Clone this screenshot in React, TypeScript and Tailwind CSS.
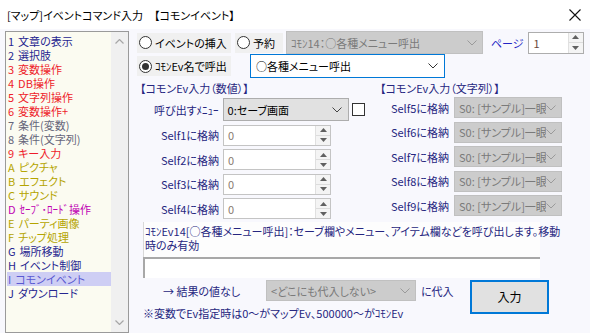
import React from "react";

const FONT = "font-['Noto_Sans_CJK_JP','Noto_Sans',sans-serif] [font-feature-settings:'palt']";

type Item = { key: string; text: string; color: string };

const ITEMS: Item[] = [
  { key: "1", text: "文章の表示", color: "text-[#262690]" },
  { key: "2", text: "選択肢", color: "text-[#262690]" },
  { key: "3", text: "変数操作", color: "text-[#ee1c2a]" },
  { key: "4", text: "DB操作", color: "text-[#ee1c2a]" },
  { key: "5", text: "文字列操作", color: "text-[#ee1c2a]" },
  { key: "6", text: "変数操作+", color: "text-[#ee1c2a]" },
  { key: "7", text: "条件(変数)", color: "text-[#66667a]" },
  { key: "8", text: "条件(文字列)", color: "text-[#66667a]" },
  { key: "9", text: "キー入力", color: "text-[#ee1c2a]" },
  { key: "A", text: "ピクチャ", color: "text-[#b4a400]" },
  { key: "B", text: "エフェクト", color: "text-[#b4a400]" },
  { key: "C", text: "サウンド", color: "text-[#b4a400]" },
  { key: "D", text: "ｾｰﾌﾞ･ﾛｰﾄﾞ操作", color: "text-[#c000b4]" },
  { key: "E", text: "パーティ画像", color: "text-[#b4a400]" },
  { key: "F", text: "チップ処理", color: "text-[#b4a400]" },
  { key: "G", text: "場所移動", color: "text-[#262690]" },
  { key: "H", text: "イベント制御", color: "text-[#262690]" },
  { key: "I", text: "コモンイベント", color: "text-[#5a5ad2]" },
  { key: "J", text: "ダウンロード", color: "text-[#262690]" },
];

function Chevron({ color = "#555" }: { color?: string }) {
  return (
    <svg width="10" height="6" viewBox="0 0 10 6" className="shrink-0">
      <path d="M0.5 0.5 L5 5 L9.5 0.5" fill="none" stroke={color} strokeWidth="1" />
    </svg>
  );
}

function Tri({ up }: { up?: boolean }) {
  return (
    <svg width="7" height="4" viewBox="0 0 7 4">
      <path d={up ? "M0 4 L3.5 0 L7 4 Z" : "M0 0 L3.5 4 L7 0 Z"} fill="#606060" />
    </svg>
  );
}

function Radio({ label, checked, w }: { label: string; checked?: boolean; w: string }) {
  return (
    <div className={`flex h-[20px] shrink-0 items-center gap-[3px] bg-[#f0f0f0] pl-[2px] ${w}`}>
      <span className="flex h-[13px] w-[13px] shrink-0 items-center justify-center rounded-full border border-[#333] bg-white">
        {checked && <span className="h-[7px] w-[7px] rounded-full bg-[#333]" />}
      </span>
      <span className="whitespace-nowrap text-[11px] leading-[14px] text-black">{label}</span>
    </div>
  );
}

function SpinButtons() {
  return (
    <div className="flex w-[15px] flex-col border-l border-[#e0e0e0] bg-[#f4f4f4]">
      <div className="flex flex-1 items-center justify-center border-b border-[#dcdcdc]">
        <Tri up />
      </div>
      <div className="flex flex-1 items-center justify-center">
        <Tri />
      </div>
    </div>
  );
}

function Spin({ value, w }: { value: string; w: string }) {
  return (
    <div className={`flex h-[21px] items-stretch border border-[#c4c4c4] bg-white ${w}`}>
      <span className="flex flex-1 items-center pl-[4px] text-[11px] leading-[14px] text-[#8a7a70]">{value}</span>
      <SpinButtons />
    </div>
  );
}

function DisabledSelect({ text, w, h = "h-[21px]" }: { text: string; w: string; h?: string }) {
  return (
    <div className={`flex items-center justify-between overflow-hidden border border-[#c0c0c0] bg-[#cccccc] pl-[4px] pr-[5px] ${w} ${h}`}>
      <span className="overflow-hidden whitespace-nowrap text-[11px] leading-[14px] text-[#7a7a7a]">{text}</span>
      <Chevron color="#9a9a9a" />
    </div>
  );
}

const LABEL = "whitespace-nowrap text-[11px] leading-[14px] text-[#262680]";

export default function App() {
  return (
    <div className={`flex h-[333px] w-[590px] flex-col overflow-hidden bg-[#f8f8fd] ${FONT}`}>
      {/* title bar */}
      <div className="flex h-[29px] shrink-0 items-center justify-between bg-white pl-[7px] pr-[9px]">
        <span className="whitespace-nowrap text-[11px] leading-[14px] text-black">[マップ]イベントコマンド入力　【コモンイベント】</span>
        <svg width="12" height="12" viewBox="0 0 12 12">
          <path d="M0.5 0.5 L11.5 11.5 M11.5 0.5 L0.5 11.5" stroke="#111" strokeWidth="1.1" />
        </svg>
      </div>

      <div className="flex flex-1 pt-[2px]">
        {/* command list */}
        <div className="ml-[5px] flex h-[302px] w-[124px] border border-[#9a9a9a] bg-[#fbfbf1]">
          <div className="flex flex-1 flex-col pl-[1px] pt-[2px]">
            {ITEMS.map((it) => (
              <div
                key={it.key}
                className={`flex h-[14px] items-center overflow-hidden whitespace-nowrap pl-[1px] text-[11px] leading-[14px] ${it.color} ${
                  it.key === "I" ? "bg-[#cecef4]" : ""
                }`}
              >
                <span className="mr-[4px]">{it.key}</span>
                <span>{it.text}</span>
              </div>
            ))}
          </div>
          <div className="flex w-[17px] flex-col items-center justify-between bg-[#f0f0f0] py-[7px]">
            <svg width="9" height="5" viewBox="0 0 9 5">
              <path d="M0.5 4.5 L4.5 0.5 L8.5 4.5" fill="none" stroke="#a6a6a6" strokeWidth="1.2" />
            </svg>
            <svg width="9" height="5" viewBox="0 0 9 5">
              <path d="M0.5 0.5 L4.5 4.5 L8.5 0.5" fill="none" stroke="#a6a6a6" strokeWidth="1.2" />
            </svg>
          </div>
        </div>

        {/* right pane */}
        <div className="ml-[8px] flex flex-1 flex-col">
          {/* row 1 */}
          <div className="flex h-[23px] items-center">
            <Radio label="イベントの挿入" w="w-[94px]" />
            <div className="w-[4px]" />
            <Radio label="予約" w="w-[48px]" />
            <div className="w-[3px]" />
            <DisabledSelect text="ｺﾓﾝ14：○各種メニュー呼出" w="w-[197px]" h="h-[23px]" />
            <span className="ml-[8px] whitespace-nowrap text-[11px] leading-[14px] text-[#2424c4]">ページ</span>
            <div className="ml-[4px] flex h-[22px] w-[56px] items-stretch border border-[#adadad] bg-white">
              <span className="flex flex-1 items-center pl-[5px] text-[11px] leading-[14px] text-[#6a4a3a]">1</span>
              <SpinButtons />
            </div>
          </div>

          {/* row 2 */}
          <div className="flex h-[24px] items-center">
            <Radio label="ｺﾓﾝEv名で呼出" checked w="w-[94px]" />
            <div className="ml-[19px] flex h-[24px] w-[195px] items-center justify-between border border-[#0078d7] bg-white pl-[5px] pr-[6px]">
              <span className="whitespace-nowrap text-[11px] leading-[14px] text-black">○各種メニュー呼出</span>
              <Chevron color="#333" />
            </div>
          </div>

          {/* two columns */}
          <div className="mt-[3px] flex">
            <div className="flex w-[228px] flex-col">
              <div className={`h-[15px] pl-[3px] ${LABEL}`}>【コモンEv入力（数値）】</div>
              <div className="mt-[2px] flex flex-col gap-[3.5px]">
                <div className="flex h-[23px] items-center">
                  <span className={`w-[82px] text-right ${LABEL}`}>呼び出すﾒﾆｭｰ</span>
                  <div className="ml-[4px] flex h-[23px] w-[127px] items-center justify-between border border-[#adadad] bg-[#e1e1e1] pl-[4px] pr-[6px]">
                    <span className="whitespace-nowrap text-[11px] leading-[14px] text-black">0:セーブ画面</span>
                    <Chevron color="#444" />
                  </div>
                  <span className="ml-[3px] h-[13px] w-[13px] border border-[#333] bg-white" />
                </div>
                {["Self1に格納", "Self2に格納", "Self3に格納", "Self4に格納"].map((l) => (
                  <div key={l} className="flex h-[21px] items-center">
                    <span className={`w-[82px] text-right ${LABEL}`}>{l}</span>
                    <div className="ml-[4px]">
                      <Spin value="0" w="w-[108px]" />
                    </div>
                  </div>
                ))}
              </div>
            </div>

            <div className="flex flex-col">
              <div className={`h-[15px] pl-[15px] ${LABEL}`}>【コモンEv入力（文字列）】</div>
              <div className="mt-[1px] flex flex-col gap-[3.5px]">
                {["Self5に格納", "Self6に格納", "Self7に格納", "Self8に格納", "Self9に格納"].map((l) => (
                  <div key={l} className="flex h-[21px] items-center">
                    <span className={`w-[84px] text-right ${LABEL}`}>{l}</span>
                    <div className="ml-[5px]">
                      <DisabledSelect text="S0: [サンプル]一眼" w="w-[108px]" />
                    </div>
                  </div>
                ))}
              </div>
            </div>
          </div>

          {/* description */}
          <div className="ml-[6px] mt-[3px] w-[397px]">
            <div className="h-[35px] border-l border-[#d8d8d8] bg-[#fdfdfd] pl-[1px] pt-[2px] text-[11px] leading-[14px] text-[#262680]">
              <div className="whitespace-nowrap">ｺﾓﾝEv14[○各種メニュー呼出]：セーブ欄やメニュー、アイテム欄などを呼び出します。移動</div>
              <div>時のみ有効</div>
            </div>
            <div className="h-[21px] border-l-2 border-t-2 border-[#a8a8a8] bg-white" />
          </div>

          {/* bottom */}
          <div className="ml-[6px] mt-[2px] flex">
            <div className="flex w-[314px] flex-col">
              <div className="flex h-[21px] items-center">
                <span className={`ml-[20px] w-[103px] ${LABEL}`}>→ 結果の値なし</span>
                <DisabledSelect text="<どこにも代入しない>" w="w-[150px]" />
                <span className={`ml-[5px] ${LABEL}`}>に代入</span>
              </div>
              <div className={`mt-[5px] ${LABEL}`}>※変数でEv指定時は0～がマップEv、500000～がｺﾓﾝEv</div>
            </div>
            <div className="ml-[13px] flex h-[34px] w-[79px] items-center justify-center border-2 border-[#0078d7] bg-[#e1e1e1] text-[12px] text-black">
              入力
            </div>
          </div>
        </div>
      </div>
    </div>
  );
}
